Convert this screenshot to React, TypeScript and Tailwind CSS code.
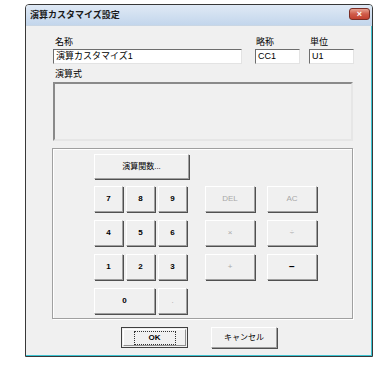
import React from 'react';

const jp = { fontFamily: '"Liberation Sans", "Noto Sans CJK JP", sans-serif' };

const Btn = ({
  children,
  className = '',
  disabled = false,
}: {
  children?: React.ReactNode;
  className?: string;
  disabled?: boolean;
}) => (
  <div
    className={`flex items-center justify-center bg-[#f0f0f0] border border-t-white border-l-white border-r-[#a0a0a0] border-b-[#a0a0a0] shadow-[1px_1px_0_#505050] text-[8px] leading-none ${
      disabled ? 'text-[#a8a8a8]' : 'text-black font-bold'
    } ${className}`}
  >
    {children}
  </div>
);

const Field = ({ value, className = '' }: { value: string; className?: string }) => (
  <div
    className={`h-[15px] mt-[1px] bg-white border border-t-[#6d6d6d] border-l-[#6d6d6d] border-r-[#e3e3e3] border-b-[#e3e3e3] flex items-center pl-[2px] text-[9px] leading-none text-black ${className}`}
  >
    {value}
  </div>
);

export default function App() {
  const digits = ['7', '8', '9', '4', '5', '6', '1', '2', '3'];

  return (
    <div className="w-[390px] h-[368px] bg-white pt-[4px] pl-[25px]" style={jp}>
      <div className="w-[348px] h-[353px] border border-[#383838] rounded-t-[4px] bg-[#f0f0f0] shadow-[inset_-1px_-1px_0_#3cc4d2] flex flex-col overflow-hidden">
        {/* title bar */}
        <div className="h-[21px] bg-gradient-to-b from-[#dfe9f5] to-[#c3d6ec] flex items-start justify-between pl-[4px] pr-[2px] border-b border-[#c9d6e4]">
          <span className="mt-[5px] text-[9px] leading-[11px] font-bold text-[#1a1a1a]">演算カスタマイズ設定</span>
          <div className="mt-[3px] w-[21px] h-[12px] rounded-[3px] border border-[#7a2e26] bg-gradient-to-b from-[#e6a191] via-[#cf5b49] to-[#c2402f] flex items-center justify-center text-white text-[9px] font-bold leading-none">
            ×
          </div>
        </div>

        {/* body */}
        <div className="flex flex-col pl-[27px] pt-[11px]">
          <div className="flex">
            <div className="w-[189px] flex flex-col">
              <span className="pl-[2px] text-[9px] leading-[11px] text-black">名称</span>
              <Field value="演算カスタマイズ1" />
            </div>
            <div className="w-[45px] ml-[13px] flex flex-col">
              <span className="pl-[1px] text-[9px] leading-[11px] text-black">略称</span>
              <Field value="CC1" />
            </div>
            <div className="w-[45px] ml-[9px] flex flex-col">
              <span className="pl-[1px] text-[9px] leading-[11px] text-black">単位</span>
              <Field value="U1" />
            </div>
          </div>

          <span className="mt-[5px] pl-[2px] text-[9px] leading-[11px] text-black">演算式</span>
          <div className="mt-[2px] w-[300px] h-[59px] border-2 border-t-[#8a8a8a] border-l-[#8a8a8a] border-r-[#e6e6e6] border-b-[#e6e6e6] bg-[#f0f0f0]" />

          {/* keypad group */}
          <div className="mt-[7px] ml-[-1px] w-[301px] h-[171px] border border-[#a0a0a0] shadow-[inset_1px_1px_0_white,1px_1px_0_white] pl-[41px] pt-[5px] flex flex-col">
            <Btn className="w-[95px] h-[25px] !font-normal">演算関数...</Btn>
            <div className="mt-[7px] flex gap-[18px]">
              <div className="grid grid-cols-[29px_29px_29px] auto-rows-[26px] gap-x-[3px] gap-y-[8px]">
                {digits.map((d) => (
                  <Btn key={d}>{d}</Btn>
                ))}
                <Btn className="col-span-2">0</Btn>
                <Btn disabled>.</Btn>
              </div>
              <div className="grid grid-cols-[50px_50px] auto-rows-[26px] gap-x-[12px] gap-y-[8px] self-start">
                <Btn disabled>DEL</Btn>
                <Btn disabled>AC</Btn>
                <Btn disabled>×</Btn>
                <Btn disabled>÷</Btn>
                <Btn disabled>+</Btn>
                <Btn className="text-[10px]">−</Btn>
              </div>
            </div>
          </div>

          {/* dialog buttons */}
          <div className="mt-[8px] pl-[68px] flex gap-[23px]">
            <div className="w-[67px] h-[21px] border border-[#404040] p-[1px]">
              <div className="w-full h-full bg-[#f0f0f0] border border-t-white border-l-white border-r-[#909090] border-b-[#909090] flex items-center justify-center">
                <div className="px-[14px] py-[2px] border border-dotted border-[#303030] text-[8px] leading-none font-bold text-black">
                  OK
                </div>
              </div>
            </div>
            <Btn className="w-[66px] h-[21px] !font-normal">キャンセル</Btn>
          </div>
        </div>
      </div>
    </div>
  );
}
